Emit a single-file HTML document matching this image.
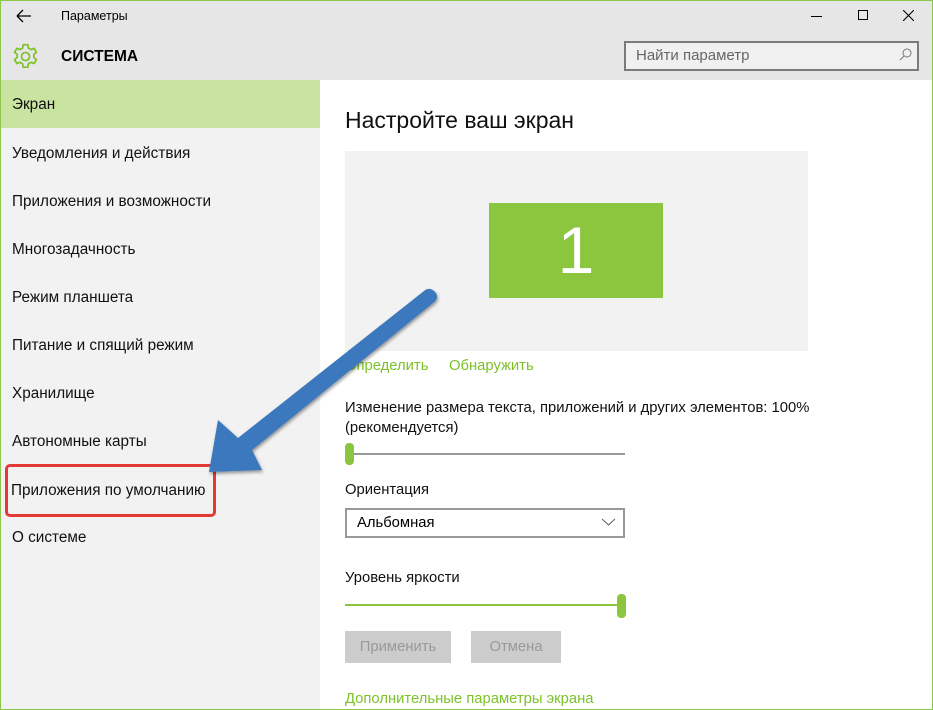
<!DOCTYPE html>
<html><head><meta charset="utf-8"><style>
*{margin:0;padding:0;box-sizing:border-box}
body{width:933px;height:710px;overflow:hidden;font-family:"Liberation Sans","Noto Sans CJK SC",sans-serif;background:#fff;position:relative;color:#000}
.a{position:absolute}
.nav{position:absolute;left:12px;font-size:15.3px;color:#111}
.t{font-size:14.8px}
</style></head><body>
<div class="a" style="left:0;top:0;width:933px;height:80px;background:#e6e6e6"></div>
<div class="a" style="left:0;top:80px;width:320px;height:630px;background:#f2f2f2"></div>
<div class="a" style="left:0;top:80px;width:320px;height:48px;background:#c9e4a1"></div>
<div class="a" style="left:0;top:0;width:933px;height:710px;border:1px solid #8cc64a"></div>
<svg class="a" style="left:16px;top:9px" width="16" height="14"><path d="M1 7H15M1 7L7 1M1 7L7 13" stroke="#000" stroke-width="1.3" fill="none"/></svg>
<div class="a" style="left:61px;top:9px;font-size:12.5px">Параметры</div>
<div class="a" style="left:811px;top:16px;width:11px;height:1px;background:#000"></div>
<div class="a" style="left:858px;top:10px;width:10px;height:10px;border:1px solid #000"></div>
<svg class="a" style="left:903px;top:10px" width="11" height="11"><path d="M0 0L11 11M11 0L0 11" stroke="#000" stroke-width="1.1"/></svg>
<svg class="a" style="left:12px;top:43px" width="27" height="27" viewBox="0 0 24 24"><path d="M10 1.5h4l.6 3 2.2 1.3 2.9-1 2 3.4-2.3 2v2.6l2.3 2-2 3.4-2.9-1-2.2 1.3-.6 3h-4l-.6-3-2.2-1.3-2.9 1-2-3.4 2.3-2v-2.6l-2.3-2 2-3.4 2.9 1 2.2-1.3z" fill="none" stroke="#7cc228" stroke-width="1.5"/><circle cx="12" cy="12" r="3.6" fill="none" stroke="#7cc228" stroke-width="1.5"/></svg>
<div class="a" style="left:61px;top:48px;font-size:15.5px;font-weight:bold">СИСТЕМА</div>
<div class="a" style="left:624px;top:41px;width:295px;height:30px;border:2px solid #7a7a7a;background:#f0f0f0"></div>
<div class="a" style="left:636px;top:47px;font-size:15px;color:#666">Найти параметр</div>
<svg class="a" style="left:899px;top:48px" width="13" height="13"><circle cx="8" cy="5" r="4" fill="none" stroke="#777"/><path d="M5 8L1 12" stroke="#777"/></svg>
<div class="nav" style="top:96px">Экран</div>
<div class="nav" style="top:145px">Уведомления и действия</div>
<div class="nav" style="top:193px">Приложения и возможности</div>
<div class="nav" style="top:241px">Многозадачность</div>
<div class="nav" style="top:289px">Режим планшета</div>
<div class="nav" style="top:337px">Питание и спящий режим</div>
<div class="nav" style="top:385px">Хранилище</div>
<div class="nav" style="top:433px">Автономные карты</div>
<div class="nav" style="top:482px;left:11px">Приложения по умолчанию</div>
<div class="nav" style="top:529px">О системе</div>
<div class="a" style="left:5px;top:464px;width:211px;height:53px;border:3px solid #e53935;border-radius:5px"></div>
<div class="a" style="left:345px;top:107px;font-size:23px;color:#111">Настройте ваш экран</div>
<div class="a" style="left:345px;top:151px;width:463px;height:200px;background:#f2f2f2"></div>
<div class="a" style="left:489px;top:203px;width:174px;height:95px;background:#8cc63f;color:#fff;font-size:66px;text-align:center;line-height:95px">1</div>
<div class="a t" style="left:345px;top:358px;color:#7cc228">Определить</div>
<div class="a t" style="left:449px;top:358px;color:#7cc228">Обнаружить</div>
<div class="a t" style="left:345px;top:398px;line-height:20px;color:#111">Изменение размера текста, приложений и других элементов: 100%<br>(рекомендуется)</div>
<div class="a" style="left:345px;top:453px;width:280px;height:2px;background:#999"></div>
<div class="a" style="left:345px;top:443px;width:9px;height:22px;border-radius:4px;background:#8cc63f"></div>
<div class="a t" style="left:345px;top:482px;color:#111">Ориентация</div>
<div class="a" style="left:345px;top:508px;width:280px;height:30px;border:2px solid #999"></div>
<div class="a t" style="left:357px;top:515px">Альбомная</div>
<svg class="a" style="left:602px;top:518px" width="13" height="8"><path d="M0 1L6.5 7L13 1" stroke="#555" fill="none"/></svg>
<div class="a t" style="left:345px;top:570px;color:#111">Уровень яркости</div>
<div class="a" style="left:345px;top:604px;width:275px;height:2px;background:#8cc63f"></div>
<div class="a" style="left:617px;top:594px;width:9px;height:24px;border-radius:4px;background:#8cc63f"></div>
<div class="a t" style="left:345px;top:631px;width:106px;height:32px;background:#ccc;color:#999;text-align:center;line-height:32px">Применить</div>
<div class="a t" style="left:471px;top:631px;width:90px;height:32px;background:#ccc;color:#999;text-align:center;line-height:32px">Отмена</div>
<div class="a t" style="left:345px;top:691px;color:#7cc228">Дополнительные параметры экрана</div>
<svg class="a" style="left:0;top:0" width="933" height="710"><defs><filter id="s"><feDropShadow dx="1" dy="2" stdDeviation="1.5" flood-color="#000" flood-opacity=".4"/></filter></defs><path d="M424 291Q430 286 436 293Q439 299 433 303L252 450L262 470L209 472L218 420L238 438Z" fill="#3a78bd" filter="url(#s)"/></svg>
</body></html>
